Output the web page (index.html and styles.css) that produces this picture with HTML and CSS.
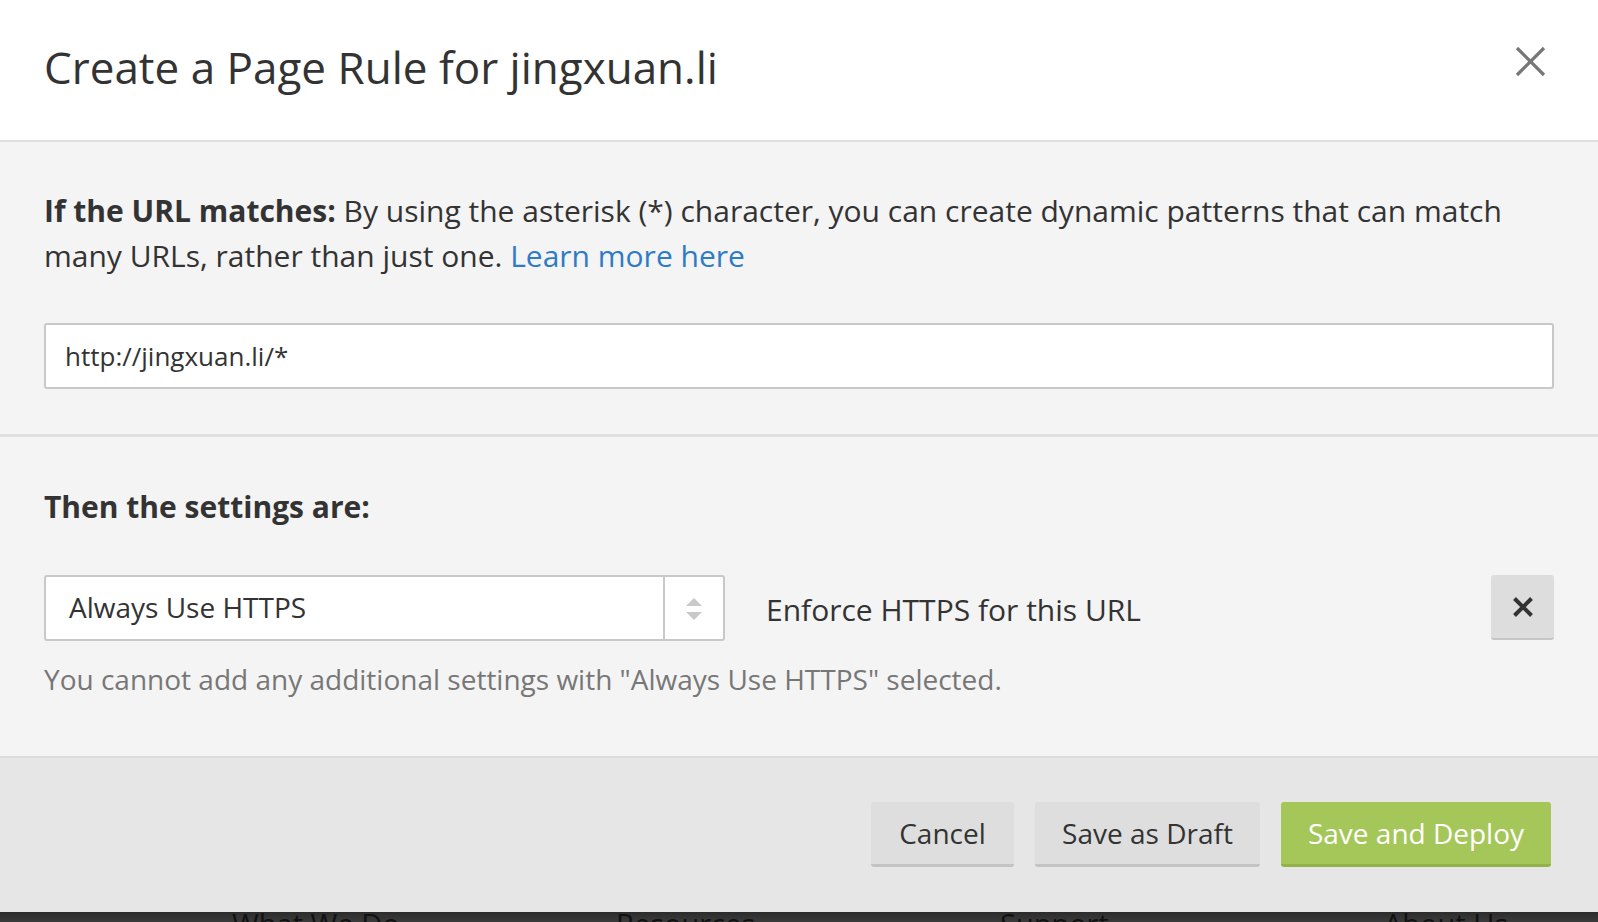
FILE: index.html
```html
<!DOCTYPE html>
<html lang="en">
<head>
<meta charset="utf-8">
<title>Create a Page Rule</title>
<link rel="stylesheet" href="styles.css">
</head>
<body>
<div class="modal">
  <header class="modal-header">
    <h1 class="modal-title">Create a Page Rule for jingxuan.li</h1>
    <button class="close-btn" aria-label="Close">
      <svg width="31" height="31" viewBox="0 0 31 31"><path d="M2 2L29 29M29 2L2 29" stroke="#777" stroke-width="3.2" fill="none"/></svg>
    </button>
  </header>
  <section class="section section-url">
    <p class="intro"><strong>If the URL matches:</strong> By using the asterisk (*) character, you can create dynamic patterns that can match many URLs, rather than just one. <a href="#" class="link">Learn more here</a></p>
    <div class="text-input">http://jingxuan.li/*</div>
  </section>
  <section class="section section-settings">
    <h2 class="settings-title">Then the settings are:</h2>
    <div class="setting-row">
      <div class="select">
        <span class="select-value">Always Use HTTPS</span>
        <span class="select-arrows">
          <svg width="16" height="24" viewBox="0 0 16 24"><path d="M8 1L16 9H0Z" fill="#c9c9c9"/><path d="M0 15H16L8 23Z" fill="#c9c9c9"/></svg>
        </span>
      </div>
      <span class="setting-desc">Enforce HTTPS for this URL</span>
      <button class="remove-btn" aria-label="Remove">
        <svg width="22" height="22" viewBox="0 0 22 22"><path d="M2.5 2.5L19.5 19.5M19.5 2.5L2.5 19.5" stroke="#333" stroke-width="4" fill="none"/></svg>
      </button>
    </div>
    <p class="helper">You cannot add any additional settings with "Always Use HTTPS" selected.</p>
  </section>
  <footer class="modal-footer">
    <button class="btn btn-gray btn-cancel">Cancel</button>
    <button class="btn btn-gray btn-draft">Save as Draft</button>
    <button class="btn btn-green btn-deploy">Save and Deploy</button>
  </footer>
</div>
<div class="page-footer">
  <span class="page-footer-item">What We Do</span>
  <span class="page-footer-item">Resources</span>
  <span class="page-footer-item">Support</span>
  <span class="page-footer-item">About Us</span>
</div>
</body>
</html>
```

FILE: styles.css
```css
* { box-sizing: border-box; }
html, body { margin: 0; padding: 0; }
body {
  background: #333;
  font-family: "Open Sans", "Noto Sans", sans-serif;
  color: #333;
  overflow: hidden;
  height: 922px;
}
.modal {
  width: 1598px;
  height: 912px;
  display: flex;
  flex-direction: column;
  background: #f4f4f4;
}
.modal-header {
  height: 142px;
  background: #fff;
  border-bottom: 2px solid #dedede;
  display: flex;
  align-items: flex-start;
  padding: 37px 52px 0 44px;
}
.modal-title {
  margin: 0;
  font-size: 44px;
  line-height: 60px;
  font-weight: 400;
  color: #333;
}
.close-btn {
  margin-left: auto;
  margin-top: 9px;
  background: none;
  border: 0;
  padding: 0;
  width: 31px;
  height: 31px;
  display: flex;
}
.section {
  padding: 0 44px;
}
.section-url {
  height: 295px;
  padding-top: 46px;
  border-bottom: 3px solid #e0e0e0;
}
.intro {
  margin: 0;
  font-size: 30px;
  line-height: 45px;
}
.intro strong { font-weight: 700; }
.link { color: #2f7bc4; text-decoration: none; }
.text-input {
  margin-top: 45px;
  height: 66px;
  background: #fff;
  border: 2px solid #c8c8c8;
  border-radius: 3px;
  display: flex;
  align-items: center;
  padding: 0 19px;
  font-size: 26px;
  color: #333;
}
.section-settings {
  height: 319px;
  padding-top: 47px;
}
.settings-title {
  margin: 0;
  font-size: 30px;
  line-height: 45px;
  font-weight: 700;
}
.setting-row {
  margin-top: 46px;
  display: flex;
  align-items: flex-start;
}
.select {
  width: 681px;
  height: 66px;
  background: #fff;
  border: 2px solid #c8c8c8;
  border-radius: 3px;
  display: flex;
  align-items: stretch;
}
.select-value {
  flex: 1;
  display: flex;
  align-items: center;
  padding-left: 23px;
  padding-bottom: 3px;
  font-size: 28px;
}
.select-arrows {
  width: 60px;
  border-left: 2px solid #c8c8c8;
  display: flex;
  align-items: center;
  justify-content: center;
  padding-top: 2px;
}
.setting-desc {
  margin-left: 41px;
  font-size: 30px;
  line-height: 66px;
  height: 66px;
  padding-top: 2px;
}
.remove-btn {
  margin-left: auto;
  width: 63px;
  height: 65px;
  background: #dddddd;
  border: 0;
  border-bottom: 2px solid #c6c6c6;
  border-radius: 3px;
  display: flex;
  align-items: center;
  justify-content: center;
  padding: 0;
}
.helper {
  margin: 17px 0 0;
  font-size: 28px;
  line-height: 42px;
  color: #777;
}
.modal-footer {
  flex: 1;
  background: #e6e6e6;
  border-top: 2px solid #dcdcdc;
  display: flex;
  justify-content: flex-end;
  align-items: flex-start;
  gap: 21px;
  padding: 44px 47px 0 0;
}
.btn {
  height: 65px;
  border: 0;
  border-radius: 3px;
  font-family: "Open Sans", "Noto Sans", sans-serif;
  font-size: 28px;
  padding: 0;
  line-height: 62px;
  white-space: nowrap;
  text-align: center;
}
.btn-gray {
  background: #dedede;
  border-bottom: 3px solid #c3c3c3;
  color: #333;
}
.btn-green {
  background: #a5c75a;
  border-bottom: 3px solid #93b34a;
  color: #fff;
}
.btn-cancel { width: 143px; }
.btn-draft { width: 225px; }
.btn-deploy { width: 270px; }
.page-footer {
  height: 10px;
  overflow: hidden;
  background: linear-gradient(#2c2c2c, #3a3a3a);
  display: grid;
  grid-template-columns: repeat(4, 384px);
  padding-left: 232px;
}
.page-footer-item {
  font-size: 29px;
  line-height: 30px;
  margin-top: -3px;
  color: #111;
  white-space: nowrap;
}
```
